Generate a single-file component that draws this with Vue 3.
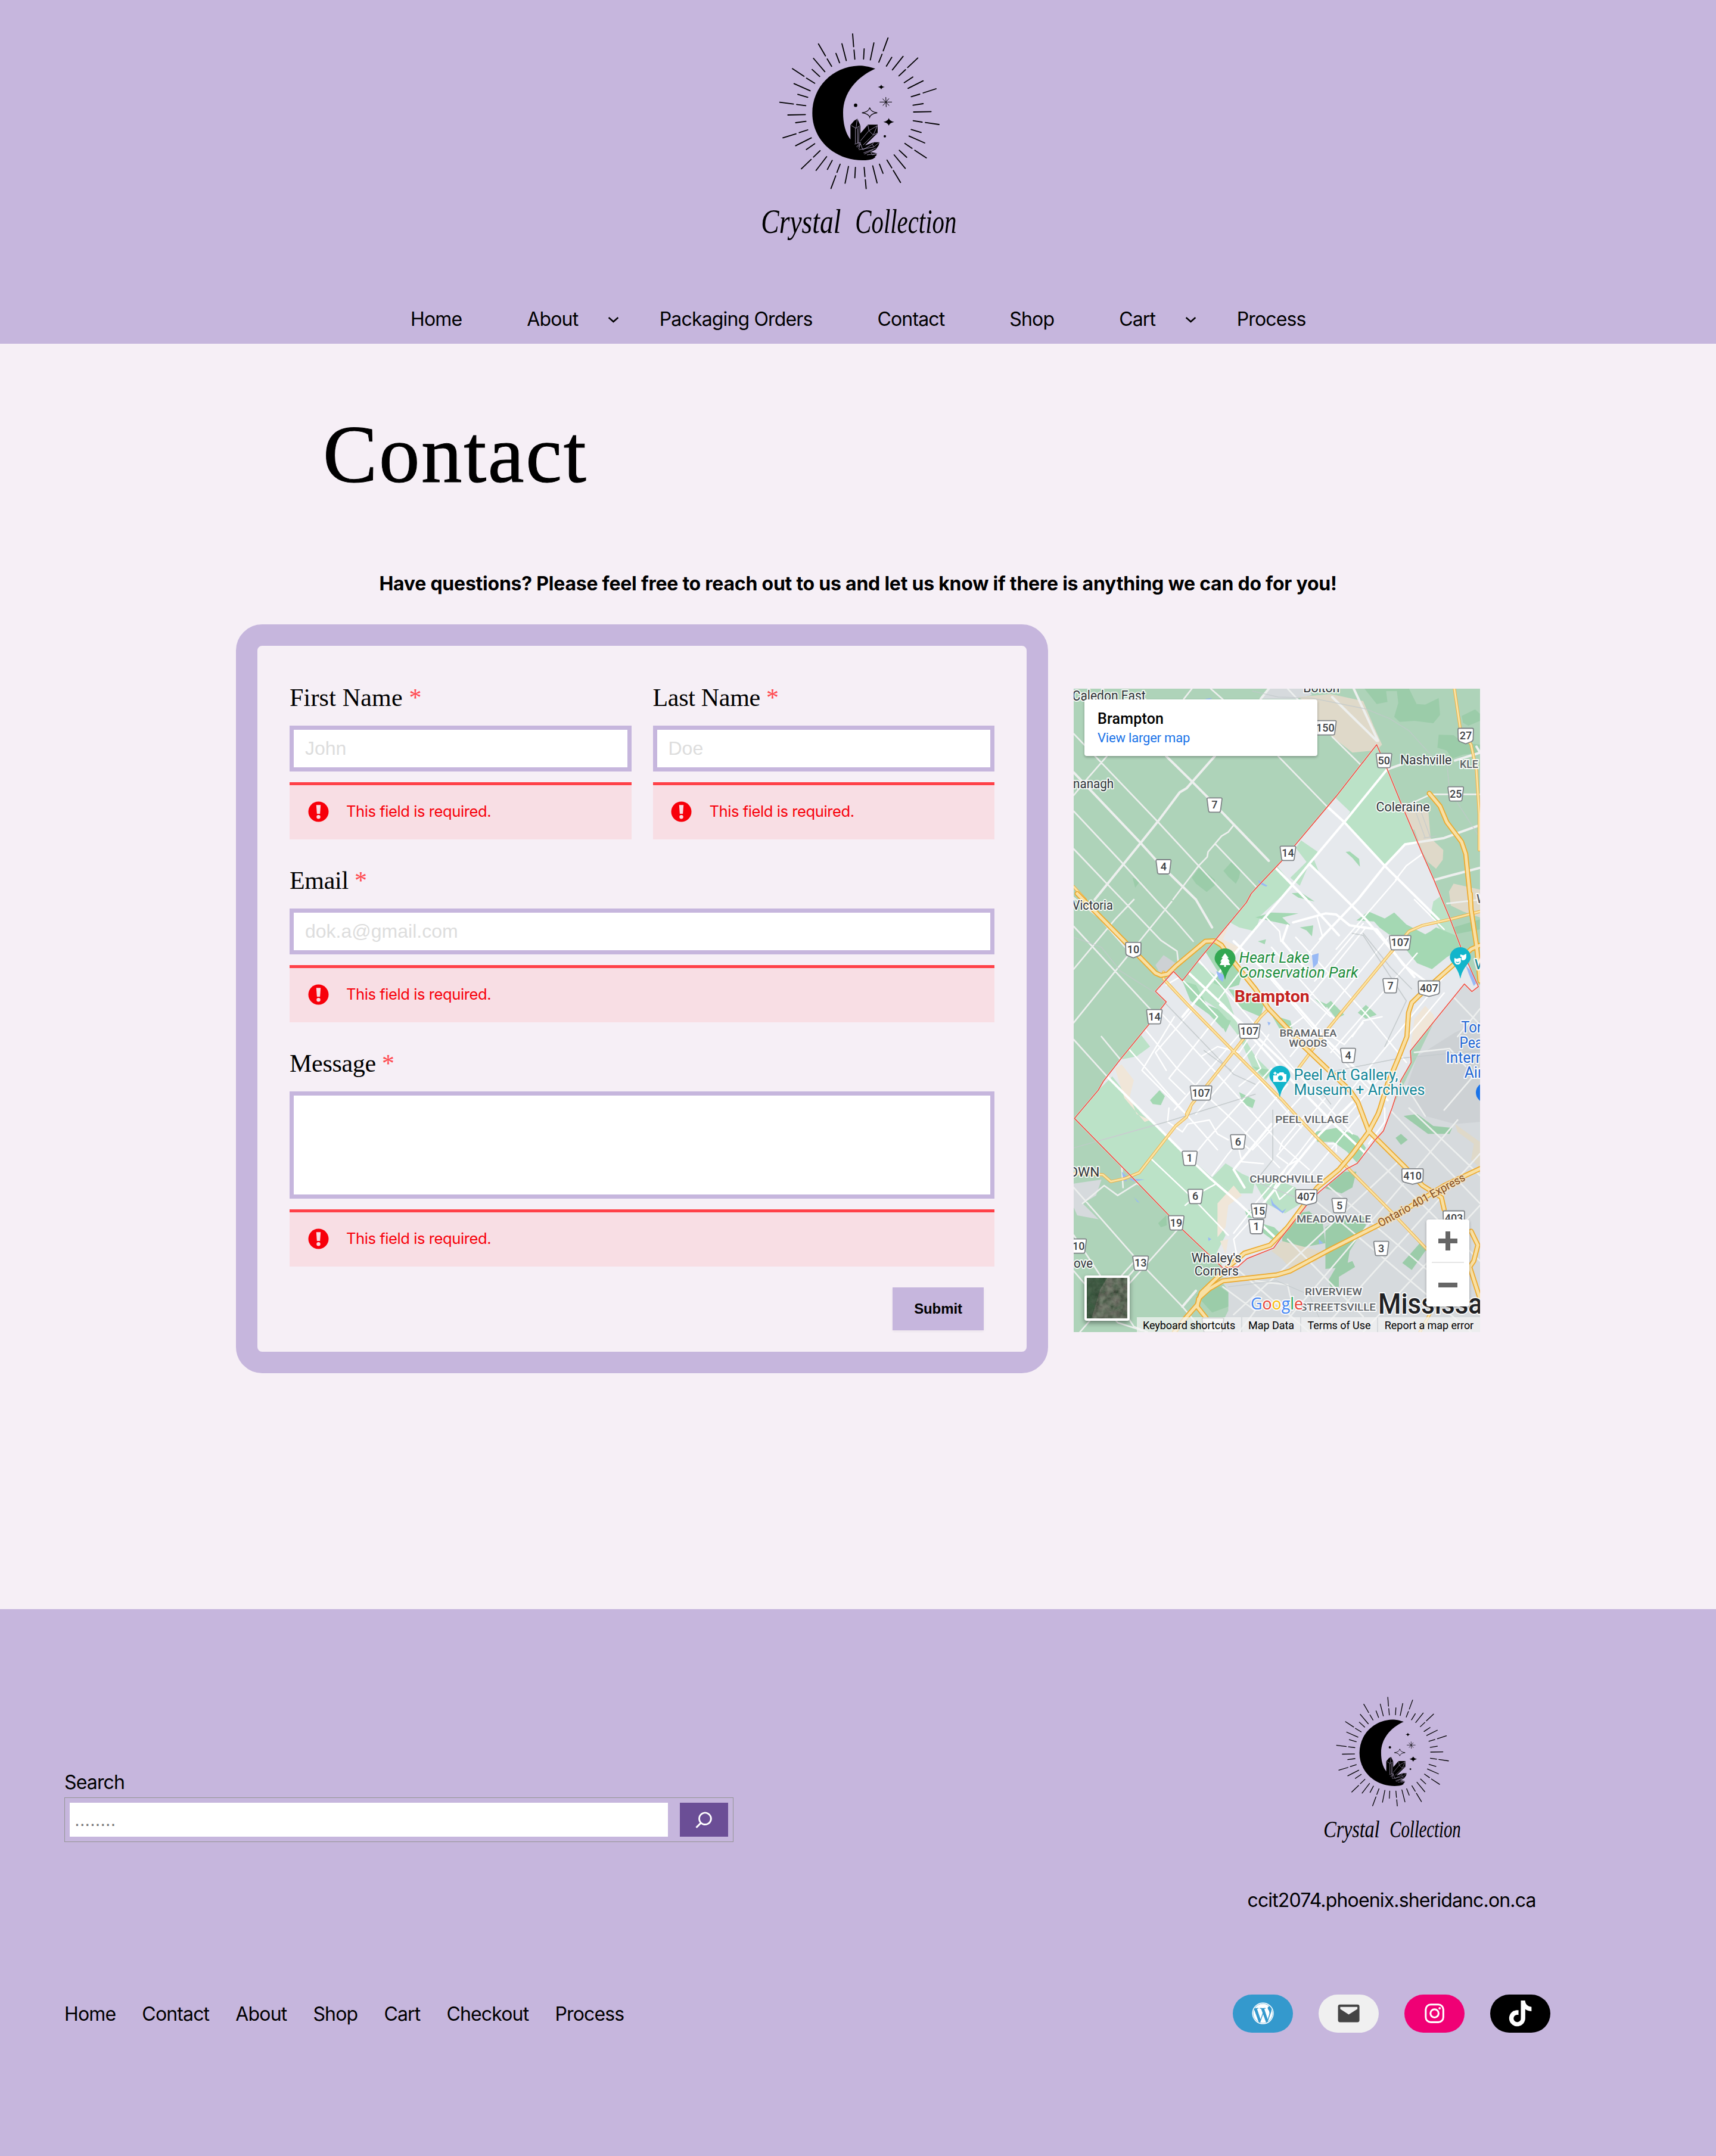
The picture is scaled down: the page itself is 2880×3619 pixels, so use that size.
<script setup>
import { h } from 'vue'

const nav = [
  { label: 'Home' },
  { label: 'About', sub: true },
  { label: 'Packaging Orders' },
  { label: 'Contact' },
  { label: 'Shop' },
  { label: 'Cart', sub: true },
  { label: 'Process' }
]
const footerNav = ['Home', 'Contact', 'About', 'Shop', 'Cart', 'Checkout', 'Process']

/* Brand mark, shared by the header and the footer */
const rays =
  'M573 81L578 145M580 162L584 208M401 131L436 191M445 207L467 244M519 130L541 215M489 179L507 226M376 204L433 271M369 260L407 295M270 256L328 294M341 304L382 329M278 331L359 367M297 385L347 400M206 425L275 434M291 436L337 442M247 489L335 487M286 528L338 521M222 604L288 584M304 578L347 564M286 644L365 604M340 663L382 634M376 701L409 669M315 760L364 713M389 768L442 699M446 763L470 718M494 778L510 737M464 859L488 795M535 833L552 748M584 805L587 753M631 753L635 799M637 815L641 860M674 745L696 831M708 737L726 783M746 716L770 755M778 769L814 829M782 690L838 758M808 667L845 702M836 632L872 657M886 667L944 705M857 595L936 630M868 562L918 577M878 518L923 525M939 527L1008 537M880 474L968 472M877 440L928 432M868 397L911 384M928 378L993 357M852 355L928 317M833 326L876 298M806 292L839 261M850 250L901 202M773 262L827 194M743 243L770 199M705 223L721 183M727 166L751 101M662 212L680 126M628 207L631 156'
const facets =
  'M566 542L590 556L611 542M590 556L596 510M587 556V632M598 556V630M606 548L603 632M583 636L615 626M650 540L655 568L697 543M655 568L677 590L697 543M655 568L612 620M677 590L626 640M677 590L697 580M690 590L640 640M604 660L612 632L624 664M604 664L680 650L706 628M625 664L672 637L680 650M672 637L680 626M628 680L690 656M632 686L676 664M645 690L694 684M664 676L672 690L694 684M592 650L610 630M598 652L612 634'
const BrandMark = () =>
  h('svg', { viewBox: '0 0 1200 1200', role: 'img' }, [
    h('path', { d: rays, stroke: '#000', 'stroke-width': 5.5, 'stroke-linecap': 'round', fill: 'none' }),
    h('path', { d: 'M687 256C650 244 625 240 604 241C470 246 370 350 370 480C370 612 480 717 622 717C645 717 662 715 675 710L688 701L560 610C535 575 525 530 525 478C525 380 590 300 687 256Z' }),
    h('path', { d: 'M562 612V540L580 518L597 508L612 542V582L650 538H699V580L636 642L680 626H708L704 642L690 662L664 676L695 682L692 694L672 706L600 690Z' }),
    h('path', { d: facets, stroke: '#c6b6dd', 'stroke-width': 2.2, fill: 'none' }),
    h('circle', { cx: 588, cy: 440, r: 8.5 }),
    h('circle', { cx: 735, cy: 596, r: 6 }),
    h('path', { d: 'M717 336Q719 346 735 348Q719 350 717 361Q715 350 699 348Q715 346 717 336Z' }),
    h('path', { d: 'M755 505Q759 520 782 524Q759 528 755 543Q751 528 728 524Q751 520 755 505Z' }),
    h('path', { d: 'M659 452Q664 474 697 478Q664 482 659 501Q654 482 620 478Q654 474 659 452Z', fill: 'none', stroke: '#000', 'stroke-width': 3.5 }),
    h('path', { d: 'M740 399L742 449M709 424H771M724 407L757 442M756 406L725 442', stroke: '#000', 'stroke-width': 3, fill: 'none' }),
    h('text', { x: 112, y: 1083, textLength: 402, lengthAdjust: 'spacingAndGlyphs', class: 'script' }, 'Crystal'),
    h('text', { x: 586, y: 1083, textLength: 510, lengthAdjust: 'spacingAndGlyphs', class: 'script' }, 'Collection')
  ])

const ErrorNote = () =>
  h('div', { class: 'error' }, [
    h('svg', { viewBox: '0 0 36 36', class: 'error-icon' }, [
      h('circle', { cx: 18, cy: 18, r: 17.5, fill: '#f7000a' }),
      h('path', { d: 'M14.2 6.5h7.6l-1.1 15h-5.4z', fill: '#f8dee4' }),
      h('circle', { cx: 18, cy: 27, r: 3.3, fill: '#f8dee4' })
    ]),
    h('span', 'This field is required.')
  ])

const SX = 2.2085
const SY = 3
const band = [0, 1080, 2160]
const at = (x, y, b) => ({ x: (x - 27) / SX, y: (y + band[b] - 48) / SY })

const city =
  '1150,330 1000,590 845,840 795,920 708,1045 685,1080 667,1125 490,1415 430,1518 397,1472 330,1572 370,1625 305,1740 200,1915 137,2025 118,2070 62,2160 30,2212 225,2482 380,2700 430,2772 580,2965 635,2960 670,2918 768,2865 795,2815 890,2650 935,2585 1040,2465 1078,2438 1145,2320 1175,2275 1207,2160 1240,2020 1278,1930 1275,1872 1365,1720 1475,1535 1503,1573 1527,1548 1462,1350 1420,1200 1383,1080 1362,1010 1320,880 1245,640 1188,450'

const outerGreens = [
  '1105,48 1150,125 1190,115 1185,60 1225,60 1230,120 1215,190 1235,215 1290,210 1360,222 1385,180 1380,95 1330,128 1298,125 1270,48',
  '1465,185 1515,152 1533,175 1533,210 1490,235 1470,220',
  '1380,280 1435,282 1470,320 1533,330 1533,370 1470,380 1430,400 1410,360 1375,345',
  '465,1000 495,945 550,1010 552,1035 520,1072 480,1030',
  '582,965 612,920 645,965 640,1000 628,1030 600,995',
  '245,1000 275,1015 255,1050',
  '1410,1260 1533,1210 1533,1260 1420,1290',
  '340,2740 370,2700 372,2750 350,2760',
  '950,2560 1010,2480 1075,2480 1060,2560 1020,2590',
  '960,2760 1010,2720 1100,2700 1110,2750 1050,2880 1040,2960 960,2970',
  '800,2700 900,2680 950,2740 960,2840 880,2860 800,2850',
  '1245,2940 1310,2840 1335,2870 1280,2975',
  '1250,2200 1300,2190 1360,2250 1430,2260 1420,2290 1340,2290',
  '970,3030 1000,2960 1060,2930 1070,2960 1010,3010 1010,3060 980,3060',
  '480,3100 560,3050 600,3090 600,3160 540,3190',
  '1220,2310 1240,2290 1265,2320 1240,2345'
]
const cityLight = [
  '1150,330 1188,450 1310,830 1250,830 1180,940 1030,715 1052,668 992,590',
  '870,812 932,870 918,910 935,968 900,930 865,1040 830,1000 890,920 850,850',
  '780,940 838,1035 800,1090 720,1190 700,1270 640,1250 600,1220 685,1080 708,1045',
  '397,1472 480,1420 560,1500 600,1610 640,1760 700,1900 760,1980 740,2020 690,1960 640,1800 560,1660 480,1590 440,1540',
  '30,2212 62,2160 118,2070 170,2000 280,2190 540,2510 620,2590 560,2720 590,2800 560,2880 580,2965 380,2700 225,2482',
  '205,1915 260,1900 310,1850 270,1780 240,1830',
  '540,2510 590,2438 650,2490 700,2520 690,2590 620,2590',
  '700,2540 780,2520 850,2560 870,2640 810,2690 740,2640',
  '1360,1120 1400,1080 1440,1230 1462,1350 1400,1290 1350,1190'
]
const cityGreens = [
  '1075,1215 1120,1170 1180,1205 1215,1175 1260,1235 1330,1285 1350,1270 1370,1250 1460,1300 1470,1350 1410,1400 1355,1460 1300,1430 1240,1330 1160,1250 1140,1220',
  '500,1340 560,1330 620,1430 650,1490 640,1540 590,1560 545,1530 560,1470',
  '600,1560 690,1580 740,1600 720,1700 650,1660',
  '430,1520 480,1540 520,1640 560,1660 600,1720 580,1760 530,1690 460,1620',
  '960,1640 980,1620 1030,1690 1000,1710',
  '1080,1680 1110,1640 1150,1690 1110,1710',
  '920,1610 970,1640 960,1660',
  '760,1690 830,1720 840,1770 790,1760',
  '700,1200 760,1175 860,1180 800,1200 830,1240 730,1210',
  '865,1250 915,1240 910,1295 890,1265',
  '710,1320 740,1310 735,1335',
  '310,2120 345,2070 365,2100 350,2145 320,2140',
  '640,2080 700,2120 690,2160 655,2140',
  '690,1950 760,1970 740,2010',
  '1035,870 1050,868 1085,905 1088,945 1060,900',
  '835,1078 870,1075 920,1120 860,1100',
  '920,2280 1000,2260 1080,2300 1110,2360 1080,2440 1040,2380 990,2330 930,2330',
  '720,2740 770,2760 800,2800 770,2830 730,2790',
  '660,2670 700,2680 710,2720 670,2710',
  '560,1700 610,1720 590,1780'
]
const outerBeige = [
  '860,90 980,75 1100,110 1140,240 1170,330 1150,358 1060,370 985,290 930,240 920,150',
  '1220,650 1240,625 1340,640 1350,800 1397,860 1395,910 1370,955 1340,920 1320,870 1290,760 1230,720',
  '1418,1070 1435,1030 1533,1060 1533,1200 1470,1170 1425,1140',
  '760,2880 800,2830 940,2880 930,2930 830,2970 800,2920',
  '1440,2240 1533,2330 1533,2460 1500,2420 1510,2340 1450,2280'
]
const cityBeige = [
  '535,1280 560,1225 600,1250 580,1310 640,1350 620,1380 560,1330',
  '180,1960 205,1940 250,2020 235,2100 260,2190 310,2220 290,2230 215,2110',
  '1290,1710 1330,1645 1360,1690 1365,1720 1275,1860',
  '560,2640 620,2550 650,2600 600,2650 590,2760 560,2810',
  '570,2830 600,2820 590,2900'
]
const waters = [
  '910,1390 935,1380 932,1430 915,1455',
  '555,1470 585,1490 580,1525 565,1510',
  '1480,1440 1500,1470 1520,1530 1510,1545 1490,1480',
  '710,1012 745,1040 740,1045 715,1030',
  '205,2480 225,2505 222,2530 212,2525',
  '230,2515 290,2520 250,2530',
  '745,1725 757,1730 750,1745',
  '757,2610 768,2640 800,2680 815,2665 802,2690 762,2650',
  '525,2810 537,2820 527,2830',
  '935,2820 952,2840 937,2845',
  '250,2608 272,2638 262,2632',
  '515,100 540,94 525,110'
]

const outerRoads =
  'M27 275L340 720L490 940L620 1130L760 1330M27 665L210 930L330 1110L400 1210L470 1320M27 855L150 1030L210 1115L350 1315L410 1370L415 1430M785 388L965 640M985 290L1090 430M27 585L75 505L150 388M395 1110L490 940L522 895L525 870L575 790L600 770L620 735M552 830L720 1070M435 100L465 48M535 48L580 102M820 48L870 120M1240 430L1188 455M1350 580H1533M1240 650L1350 580M27 1245L330 1690M27 1100L120 1200L250 1400M27 1730L390 1120M27 1460L180 1210L250 1110M27 1815L210 2090M200 1915L130 1800M27 2560L260 2920L430 3160L480 3240M27 2800L250 3260L300 3288M60 2640L140 2550L190 2600L260 2540L300 2560M27 2980L190 3240L280 3280M130 3200L420 2760L540 2560M260 2920L120 3130M50 3288L260 2960M205 2450L210 2560M1410 1130L1533 1110M1385 1530L1533 1740M900 2600L1500 3288M960 2540L1533 3200M1090 2340L1533 2930M1200 2170L1533 2640M1270 2160L1533 2500M640 2980L900 3288M820 2820L1100 3210M780 3288L1450 2220M620 3200L900 2850L1230 2430M940 3288L1533 2390M1100 3288L1533 2650M1040 1930L1110 1960M1290 1880L1420 1860L1480 1950M1400 2170L1533 1960M1330 2200L1260 2050M1450 1800L1533 1660M580 3060L700 3180L640 3288M700 3030L820 3050L830 3110'
const outerMain =
  'M27 470L275 825L345 930L480 1110L540 1250M370 388L465 515L520 590L750 915M105 1110L275 825L340 715L420 570L445 550L550 388M985 90L1150 310M1065 48L1155 310M720 100L750 48M1188 455L1240 430M1300 822L1400 800L1533 735M1240 1110L1300 1035L1420 990L1533 950M430 3160L480 3080M1520 340L1533 370M1440 410L1533 370'
const rails =
  'M690 60L785 90L910 95L1110 150L1200 200L1270 260L1350 380L1410 420L1420 560L1533 800M27 1300L130 1350L200 1470L330 1580L620 1990L700 2040M27 2360L370 2230L700 2090M765 2170V2420L700 2530L870 2620M1100 1280L1200 1450L1280 1560M510 1870L610 1970M930 2050L980 2140M600 3060L780 3030L900 3100L960 3288M1290 650L1330 800M1310 650L1350 800M1325 800L1370 790M1060 1280L1100 1290L1260 1620L1180 1850M970 1980L1230 1910L1533 1870'
const cityMain =
  'M1188 455L1030 720L900 930L835 1040L680 1290L430 1700M1300 822L1255 832L1180 940L1080 1110L940 1310M750 915L890 1110L1010 1290M965 640L1030 720L1180 940L1380 1210M840 1225L880 1210L960 1180L1000 1185L1050 1240L1150 1260L1250 1440L1370 1560M150 2000L290 2190L430 2380L530 2510L640 2640L780 2820M430 1450L580 1640L820 2000L1000 2250L1110 2390M570 1640L640 1720L690 1780L850 1990M900 930L960 1010L1110 1210L1290 1500M620 1320L760 1500L960 1810L1190 2120M700 2690L760 2590L940 2290L1060 2130M820 1240L800 1320L900 1480M660 2560L620 2470L760 2240'
const cityRoads =
  'M1230 1000L1000 1360M1320 880L1260 940L1220 1010M1290 1110L1400 1260M740 1200L790 1270L795 1320M930 1200L950 1300L900 1380M1100 1230L920 1520M1110 1250L900 1600M1200 1290L830 1900M1300 1380L980 1880M1410 1480L1180 1860L1060 2060M1400 1580L1270 1790M850 1300L1120 1700L1260 1930M760 1350L1000 1720M700 1420L960 1830L1140 2090M640 1480L560 1620M480 1400L900 2050L1060 2290M400 1560L640 1900L870 2260M350 1680L560 1990L800 2350L900 2470M290 1760L410 1960L640 2250L790 2460M230 1860L560 2370M400 1700L280 1970L450 2200M470 1660L330 1880L370 1970M560 1700L380 2010L440 2090M640 1790L400 2170M700 1840L480 2190M760 1960L520 2320L460 2420M820 2040L600 2390L540 2500M900 2060L690 2370M960 2110L780 2400L820 2440M1030 2090L860 2390L700 2640M1090 2190L900 2500M1160 2010L1040 2200M690 1780L640 1880L560 1850L500 1900M750 1790L700 1900L720 1960L640 2050M1100 1730L1030 1840L960 1780M1170 1700L1100 1720L1060 1800M380 2160L375 2230L430 2280L450 2240L530 2220L560 2290L600 2320M640 2370L650 2430L730 2440M790 2370L800 2330L880 2200M860 2420L820 2450L770 2560L790 2620L840 2560M970 2340L1000 2340L1000 2380M1180 2160L1180 2230L1120 2340M370 1540L420 1500L560 1700M880 1700L830 1750M900 1600L980 1700M620 2300L680 2370M310 2410L450 2590L480 2630L600 2800M550 2545L490 2590L440 2650M620 2790L700 2650M640 2960L620 2820L740 2640'
const highways =
  'M40 1080L110 1175L215 1320L330 1480L350 1492L375 1485L405 1445L515 1320L550 1318L575 1340L600 1390L700 1560L750 1660L820 1760L880 1850L1050 2070L1080 2130L1120 2275L1250 2450L1320 2550L1390 2610L1400 2670M1500 2780L1525 2850L1510 2930L1495 2960L1533 3120M1163 2160L1155 2190L1120 2280L1060 2390L1010 2470L930 2560L880 2650L820 2760L755 2850L660 2890L600 2960L500 3090L485 3150L440 3220L400 3288M1533 1340L1500 1360L1400 1480L1310 1590L1280 1630L1268 1680L1262 1800L1230 1910L1190 2040L1163 2160M1497 1080L1500 1160L1520 1340L1533 1520M1533 2465L1400 2550L1270 2660L1155 2750L980 2870L830 2980L780 3000L580 3030L530 3070L490 3120L485 3160L520 3220M1345 575L1385 640L1410 720L1465 820L1480 880L1497 1110'
const arterials =
  'M360 1475V1510L450 1640L620 1875L800 2120L840 2180L930 2310L1020 2430L1210 2690L1335 2870M400 3280M445 2190L465 2140L530 2030L620 1875L720 1700L750 1660M460 2160L445 2205L405 2250L270 2485L215 2515L165 2530L135 2495L27 2490M860 1960L970 1760L1200 1380L1270 1270L1320 1240L1420 1210L1533 1170M1438 48L1460 250L1500 330L1520 460L1530 680V860M27 1045L70 1110M1310 3288L1350 3190'

const places = [
  ['Caledon East', 22, 107, 0, 123, 23], ['Bolton', 878, 66, 0, 61, 22], ['Nashville', 1237, 428, 0, 86.5, 22], ['KLE', 1458, 447, 0, 31, 18, 'dim'],
  ['Coleraine', 1148, 665, 0, 90, 22], ['nanagh', 25, 550, 0, 68, 22], ['Victoria', 22, 82, 1, 68, 22], ['W', 1520, 48, 1, 18, 20, 'dim'],
  ['OWN', 8, 345, 2, 52, 22], ['ove', 27, 803, 2, 32, 22], ["Whaley's", 463, 776, 2, 84, 22], ['Corners', 475, 842, 2, 74, 22],
  ['BRAMALEA', 790, 720, 1, 96, 17, 'dim'], ['WOODS', 825, 770, 1, 64, 17, 'dim'], ['PEEL VILLAGE', 774, 76, 2, 123, 17, 'dim'],
  ['CHURCHVILLE', 679, 375, 2, 123, 17, 'dim'], ['MEADOWVALE', 853, 576, 2, 125, 17, 'dim'], ['RIVERVIEW', 884, 943, 2, 96, 17, 'dim'],
  ['STREETSVILLE', 866, 1019, 2, 127, 17, 'dim'],
  ['Heart Lake', 640, 347, 1, 118, 25, 'park'], ['Conservation Park', 640, 422, 1, 200, 25, 'park'],
  ['Brampton', 623, 545, 1, 126, 27, 'focus'],
  ['Peel Art Gallery,', 843, 938, 1, 175, 25, 'art'], ['Museum + Archives', 843, 1014, 1, 220, 25, 'art'],
  ['W', 1512, 380, 1, 24, 24, 'art'],
  ['Toronto', 1463, 700, 1, 82, 25, 'air'], ['Pearson', 1457, 776, 1, 84, 25, 'air'], ['International', 1407, 852, 1, 138, 25, 'air'], ['Airport', 1475, 927, 1, 76, 25, 'air']
].map(([t, x, y, b, w, s, c]) => ({ t, w, s, c, ...at(x, y, b) }))

const badges = [
  ['150', 960, 245, 0], ['27', 1480, 285, 0, 1], ['50', 1177, 410, 0], ['25', 1443, 578, 0], ['7', 549, 634, 0], ['14', 821, 877, 0], ['4', 360, 945, 0],
  ['10', 248, 283, 1, 1], ['14', 326, 620, 1], ['107', 678, 693, 1], ['107', 1237, 247, 1], ['7', 1201, 464, 1], ['407', 1344, 477, 1, 1], ['4', 1044, 815, 1], ['107', 499, 1004, 1],
  ['6', 636, 170, 2], ['1', 457, 253, 2], ['6', 478, 445, 2], ['15', 714, 518, 2], ['1', 704, 597, 2], ['407', 889, 448, 2, 1], ['5', 1012, 491, 2],
  ['410', 1283, 343, 2, 1], ['19', 407, 578, 2], ['3', 1167, 707, 2], ['13', 275, 781, 2], ['10', 45, 695, 2], ['403', 1436, 555, 2, 1], ['', 543, 1093, 2]
].map(([t, x, y, b, shield]) => {
  const w = [18, 12.5, 13, 18][t.length]
  const d = shield
    ? `M${-w + 2} -12.5H${w - 2}Q${w} -12.5 ${w} -10L${w - 0.5} 6Q${w - 1} 9 ${w - 4} 10L0 13.5L${4 - w} 10Q${1 - w} 9 ${0.5 - w} 6L${-w} -10Q${-w} -12.5 ${2 - w} -12.5Z`
    : `M${-w + 2} -12H${w - 2}Q${w + 0.5} -12 ${w} -9.5L${w - 2.5} 10Q${w - 3} 12 ${w - 5} 12H${5 - w}Q${3 - w} 12 ${2.5 - w} 10L${-w} -9.5Q${-w - 0.5} -12 ${2 - w} -12Z`
  return { t, d, ...at(x, y, b) }
})
const pinShape = 'M0 52C-3 38 -8 33 -13 26C-16 22 -17.5 19 -17.5 16A17.5 17 0 1 1 17.5 16C17.5 19 16 22 13 26C8 33 3 38 0 52Z'
const pins = [
  { kind: 'tree', fill: '#34a853', ...at(588, 279, 1) },
  { kind: 'photo', fill: '#12b5cb', ...at(791, 870, 1) },
  { kind: 'mask', fill: '#12b5cb', ...at(1460, 273, 1) }
]
</script>

<template>
  <div class="page">
    <header class="top">
      <BrandMark class="brand" />
      <nav class="nav">
        <a v-for="n in nav" :key="n.label" :class="{ sub: n.sub }">
          {{ n.label }}
          <svg v-if="n.sub" viewBox="0 0 12 12" class="chev"><path d="M1.5 4L6 8l4.5-4" /></svg>
        </a>
      </nav>
    </header>

    <main>
      <h1>Contact</h1>
      <p class="intro">Have questions? Please feel free to reach out to us and let us know if there is anything we can do for you!</p>
      <div class="columns">
        <form class="card" @submit.prevent>
          <div class="row">
            <div class="field"><label class="wide">First Name <i>*</i></label><input placeholder="John" /><ErrorNote /></div>
            <div class="field"><label>Last Name <i>*</i></label><input placeholder="Doe" /><ErrorNote /></div>
          </div>
          <div class="field"><label>Email <i>*</i></label><input placeholder="dok.a@gmail.com" /><ErrorNote /></div>
          <div class="field"><label>Message <i>*</i></label><textarea></textarea><ErrorNote class="last" /></div>
          <button class="submit">Submit</button>
        </form>

        <div class="map">
          <svg viewBox="0 0 682 1080" class="canvas">
            <defs>
              <clipPath id="city"><polygon :points="city" /></clipPath>
            </defs>
            <rect width="682" height="1080" fill="#aed3b9" />
            <g transform="scale(.4528 .33333) translate(-27 -48)">
              <polygon fill="#d6dadd" points="1365,1720 1475,1535 1533,1540 1533,3288 560,3288 600,3180 600,3080 570,3020 640,2950 900,2630 1207,2160" />
              <polygon fill="#cdd1d4" points="1300,1900 1440,1780 1533,1720 1533,2230 1440,2240 1330,2200 1260,2060" />
              <polygon fill="#d6dadd" points="27,2540 130,2520 110,2600 60,2640 120,2720 40,2700 27,2660" />
              <polygon fill="#d6dadd" points="720,100 750,48 900,48 910,80 850,100" />
              <polygon fill="#cdd1d4" points="330,1440 360,1390 405,1430 400,1480 350,1490" />
              <polygon v-for="p in outerGreens" :key="p" :points="p" fill="#9bcca9" />
              <polygon v-for="p in outerBeige" :key="p" :points="p" fill="#dfd9c9" />
              <path :d="outerRoads" class="r" stroke="#edefee" stroke-width="2.6" />
              <path :d="outerMain" class="r" stroke="#edefee" stroke-width="4" />
              <g clip-path="url(#city)">
                <polygon :points="city" fill="#e6e9ed" />
                <polygon v-for="p in cityLight" :key="p" :points="p" fill="#bbe2c7" />
                <polygon v-for="p in cityGreens" :key="p" :points="p" fill="#a4d8b3" />
                <polygon v-for="p in cityBeige" :key="p" :points="p" fill="#f0e6d8" />
                <path :d="rails" class="r" stroke="#d2d5d8" stroke-width="1.6" />
                <path :d="cityRoads" class="r" stroke="#fff" stroke-width="2.4" />
                <path :d="cityMain" class="r" stroke="#fff" stroke-width="4" />
              </g>
              <polygon v-for="p in waters" :key="p" :points="p" fill="#98b9f5" />
              <path :d="rails" class="r" stroke="#c2c9cb" stroke-width="1.5" opacity=".7" />
              <path :d="arterials" class="r" stroke="#eeb044" stroke-width="5" />
              <path :d="arterials" class="r" stroke="#fbe3a2" stroke-width="3" />
              <path :d="highways" class="r" stroke="#eda92c" stroke-width="8.5" />
              <path :d="highways" class="r" stroke="#f8e0a4" stroke-width="5" />
              <polygon :points="city" class="r" stroke="#fff" stroke-width="3" opacity=".5" />
              <polygon :points="city" class="r" stroke="#ee5347" stroke-width="1.7" />
            </g>

            <g v-for="(b, i) in badges" :key="'b' + i" :transform="`translate(${b.x} ${b.y})`">
              <path :d="b.d" fill="#fff" stroke="#7f8387" stroke-width="1.8" />
              <text v-if="b.t" y="6" text-anchor="middle" class="num">{{ b.t }}</text>
            </g>

            <g v-for="p in pins" :key="p.kind" :transform="`translate(${p.x} ${p.y})`">
              <path :d="pinShape" :fill="p.fill" />
              <path v-if="p.kind === 'tree'" fill="#fff" d="M0 7L6 15H4L8 21H6L9 27H1.5V30H-1.5V27H-9L-6 21H-8L-4 15H-6Z" />
              <g v-else-if="p.kind === 'photo'">
                <path fill="#fff" d="M-11 15H-5V12H-2L0 10H6L8 13H11V26H-11Z" />
                <path stroke="#fff" stroke-width="1.8" d="M-8 9V14M-10.5 11.5H-5.5" />
                <circle cx="1" cy="19.5" r="4.2" :fill="p.fill" />
              </g>
              <g v-else fill="#fff">
                <path d="M-10 17L-6 18.5L-2 17H1V23Q0 28 -4.500 28Q-9 28 -10 23Z" />
                <path d="M0 11L5 12.500L10 10V16Q9 21 4 21L2 20V15H0Z" />
                <path d="M-7.500 23.500Q-4.500 26 -1.500 23.500" fill="none" :stroke="p.fill" stroke-width="1.4" />
              </g>
            </g>
            <circle cx="692" cy="678" r="17" fill="#1a73e8" />

            <text v-for="(p, i) in places" :key="'p' + i" :x="p.x" :y="p.y" :font-size="p.s" :textLength="p.w" lengthAdjust="spacingAndGlyphs" class="place" :class="p.c">{{ p.t }}</text>
            <text transform="translate(515 904) rotate(-29)" font-size="19" textLength="164" lengthAdjust="spacingAndGlyphs" class="place road">Ontario 401 Express</text>
            <text x="511" y="1049" font-size="49" textLength="248" lengthAdjust="spacingAndGlyphs" class="place big">Mississauga</text>
            <text x="297" y="1042" font-size="27" textLength="88" lengthAdjust="spacingAndGlyphs" class="place google"><tspan fill="#4285f4">G</tspan><tspan fill="#ea4335">o</tspan><tspan fill="#fbbc04">o</tspan><tspan fill="#4285f4">g</tspan><tspan fill="#34a853">l</tspan><tspan fill="#ea4335">e</tspan></text>
          </svg>
          <div class="info"><b>Brampton</b><span>View larger map</span></div>
          <div class="zoom"><span class="plus"></span><hr /><span class="minus"></span></div>
          <div class="thumb">
            <svg viewBox="0 0 68 68">
              <filter id="terrain" x="0" y="0" width="100%" height="100%">
                <feTurbulence type="fractalNoise" baseFrequency=".09" numOctaves="4" seed="4" />
                <feColorMatrix values=".5 .3 0 0 -.14  .4 .45 0 0 -.12  .4 .3 0 0 -.12  0 0 0 0 1" />
              </filter>
              <rect width="68" height="68" fill="#45503f" />
              <rect width="68" height="68" filter="url(#terrain)" />
              <rect width="68" height="68" fill="#20281f" opacity=".4" />
              <path d="M0 0H34L22 20L8 68H0Z" fill="#1f4a2c" opacity=".5" />
            </svg>
          </div>
          <div class="legal"><span>Keyboard shortcuts</span><span>Map Data</span><span>Terms of Use</span><span>Report a map error</span></div>
        </div>
      </div>
    </main>

    <footer>
      <div class="left">
        <div class="search">
          <label>Search</label>
          <div class="searchbox">
            <input placeholder="........" />
            <button aria-label="Search">
              <svg viewBox="0 0 24 24"><path fill="#fff" d="M13 5c-3.3 0-6 2.7-6 6 0 1.4.5 2.7 1.3 3.7l-3.8 3.8 1.1 1.1 3.8-3.8c1 .8 2.3 1.3 3.7 1.3 3.3 0 6-2.7 6-6S16.3 5 13 5zm0 10.500c-2.500 0-4.500-2-4.500-4.500s2-4.500 4.500-4.500 4.500 2 4.500 4.500-2 4.500-4.500 4.500z" /></svg>
            </button>
          </div>
        </div>
        <nav class="links"><a v-for="l in footerNav" :key="l">{{ l }}</a></nav>
      </div>
      <div class="right">
        <BrandMark class="brand small" />
        <p>ccit2074.phoenix.sheridanc.on.ca</p>
        <div class="social">
          <a class="wp"><svg viewBox="0 0 24 24" fill="#fff"><path d="M12.158,12.786L9.46,20.625c0.806,0.237,1.657,0.366,2.54,0.366c1.047,0,2.051-0.181,2.986-0.51c-0.024-0.038-0.046-0.079-0.065-0.124L12.158,12.786z M3.009,12c0,3.559,2.068,6.634,5.067,8.092L3.788,8.341C3.289,9.459,3.009,10.696,3.009,12z M18.069,11.546c0-1.112-0.399-1.881-0.741-2.48c-0.456-0.741-0.883-1.368-0.883-2.109c0-0.826,0.627-1.596,1.51-1.596c0.04,0,0.078,0.005,0.116,0.007C16.472,3.904,14.34,3.009,12,3.009c-3.141,0-5.904,1.612-7.512,4.052c0.211,0.007,0.41,0.011,0.579,0.011c0.94,0,2.396-0.114,2.396-0.114C7.947,6.93,8.004,7.642,7.52,7.699c0,0-0.487,0.057-1.029,0.085l3.274,9.739l1.968-5.901l-1.401-3.838C9.848,7.756,9.389,7.699,9.389,7.699C8.904,7.67,8.961,6.93,9.446,6.958c0,0,1.484,0.114,2.368,0.114c0.94,0,2.397-0.114,2.397-0.114c0.485-0.028,0.542,0.684,0.057,0.741c0,0-0.488,0.057-1.029,0.085l3.249,9.665l0.897-2.996C17.841,13.284,18.069,12.316,18.069,11.546z M19.889,7.686c0.039,0.286,0.06,0.593,0.06,0.924c0,0.912-0.171,1.938-0.684,3.22l-2.746,7.94c2.673-1.558,4.47-4.454,4.47-7.771C20.991,10.436,20.591,8.967,19.889,7.686z" /><circle cx="12" cy="12" r="9.650" fill="none" stroke="#fff" stroke-width=".8" /></svg></a>
          <a class="mail"><svg viewBox="0 0 24 24"><rect x="2" y="3.700" width="20" height="16.600" rx="1.900" fill="#444" /><path d="M4.100 6H20.100V7.900L12 13.100L4.100 7.900Z" fill="#f0f0f0" /></svg></a>
          <a class="ig"><svg viewBox="0 0 24 24" fill="none" stroke="#fff" stroke-width="1.700"><rect x="3.800" y="3.800" width="16.400" height="16.400" rx="4.600" /><circle cx="12" cy="12" r="3.800" /><circle cx="16.800" cy="7.200" r="1.100" fill="#fff" stroke="none" /></svg></a>
          <a class="tt"><svg viewBox="0 0 32 32" fill="#fff"><path d="M16.708 0.027c1.745-0.027 3.48-0.011 5.213-0.027 0.105 2.041 0.839 4.12 2.333 5.563 1.491 1.479 3.6 2.156 5.652 2.385v5.369c-1.923-0.063-3.855-0.463-5.6-1.291-0.76-0.344-1.468-0.787-2.161-1.24-0.009 3.896 0.016 7.787-0.025 11.667-0.104 1.864-0.719 3.719-1.803 5.255-1.744 2.557-4.771 4.224-7.88 4.276-1.907 0.109-3.812-0.411-5.437-1.369-2.693-1.588-4.588-4.495-4.864-7.615-0.032-0.667-0.043-1.333-0.016-1.984 0.24-2.537 1.495-4.964 3.443-6.615 2.208-1.923 5.301-2.839 8.197-2.297 0.027 1.975-0.052 3.948-0.052 5.923-1.323-0.428-2.869-0.308-4.025 0.495-0.844 0.547-1.485 1.385-1.819 2.333-0.276 0.676-0.197 1.427-0.181 2.145 0.317 2.188 2.421 4.027 4.667 3.828 1.489-0.016 2.916-0.88 3.692-2.145 0.251-0.443 0.532-0.896 0.547-1.417 0.131-2.385 0.079-4.76 0.095-7.145 0.011-5.375-0.016-10.735 0.025-16.093z" /></svg></a>
        </div>
      </div>
    </footer>
  </div>
</template>

<style>
body { background: #f6eff6; }
.script { font-family: "Liberation Serif", serif; font-style: italic; font-size: 172px; fill: #000; }
.error { display: flex; align-items: center; box-sizing: border-box; height: 96px; margin-top: 18px; padding-left: 30.5px; border-top: 5px solid #ff4148; background: #f8dee4; color: #f7000a; font: 25.6px/36px Inter, sans-serif; letter-spacing: -.45px; }
.error.last { padding-bottom: 0; }
.error-icon { width: 35px; height: 35px; margin: 0 29.5px 2px 0; flex: none; }
.error span { margin-bottom: 4px; }
</style>

<style scoped>
.page { width: 2880px; height: 3619px; display: flex; flex-direction: column; overflow: hidden; background: #f6eff6; color: #000; font: 32px/48px Inter, sans-serif; }
.page * { box-sizing: border-box; }
.top { height: 577px; background: #c6b6dd; display: flex; flex-direction: column; align-items: center; padding-top: 30px; }
.brand { width: 400px; height: 400px; display: block; flex: none; }
.nav { display: flex; align-self: flex-start; margin: 81.5px 0 0 689px; gap: 109px; letter-spacing: -.85px; white-space: nowrap; }
.nav .sub { display: flex; align-items: center; gap: 49px; margin-right: -42.5px; }
.chev { width: 21px; height: 21px; margin-top: 2px; fill: none; stroke: #000; stroke-width: 1.4; }
main { flex: none; height: 2124px; }
h1 { margin: 110px 0 0 542px; font: 400 137px/152px "Liberation Serif", serif; letter-spacing: 2.6px; -webkit-text-stroke: 1px #000; }
.intro { margin: 116.5px 0 0; text-align: center; font-weight: 700; letter-spacing: -.23px; }
.columns { display: flex; align-items: flex-start; gap: 43px; padding-left: 396px; margin-top: 44.5px; }
.card { width: 1363px; height: 1257px; border: 36px solid #c6b6dd; border-radius: 44px; padding: 64px 54px 0; display: flex; flex-direction: column; }
.row { display: flex; gap: 36px; }
.row .field { flex: 1; }
.field { display: flex; flex-direction: column; margin-bottom: 46px; }
.field:last-of-type { margin-bottom: 0; }
.row .field { margin-bottom: 46px; }
.field label { font: 42px/46px "Liberation Serif", serif; margin-bottom: 24px; letter-spacing: -.3px; }
.field label.wide { letter-spacing: .2px; }
.field label i { color: #ff4a50; font-style: normal; }
.field input, .field textarea { width: 100%; height: 77px; border: 7px solid #c6b6dd; background: #fff; padding: 0 19px; font: 32px "Liberation Sans", sans-serif; letter-spacing: 0; border-radius: 0; outline: none; resize: none; }
.field textarea { height: 180px; display: block; }
.field input::placeholder { color: #ddd; opacity: 1; }
.submit { align-self: flex-end; margin: 35px 18px 0 0; width: 153px; height: 72px; padding: 0; border: 0; background: #c6b6dd; font: 700 24px "Liberation Sans", sans-serif; letter-spacing: -.1px; box-shadow: 0 2px 4px rgba(0, 0, 0, .05); color: #000; }

.map { position: relative; width: 682px; height: 1080px; margin-top: 108px; overflow: hidden; font-family: Roboto, sans-serif; }
.canvas { display: block; width: 682px; height: 1080px; }
.r { fill: none; vector-effect: non-scaling-stroke; stroke-linejoin: round; stroke-linecap: round; }
.num { font: 500 18px Roboto, sans-serif; fill: #3c4043; }
.place { font-family: Roboto, sans-serif; fill: #30343a; paint-order: stroke; stroke: #fff; stroke-opacity: .85; stroke-width: 4px; stroke-linejoin: round; }
.dim { fill: #5c6166; font-weight: 500; }
.park { fill: #1e8e3e; font-style: italic; }
.focus { fill: #c5221f; font-weight: 700; }
.art { fill: #16889a; }
.air { fill: #2166d4; }
.road { fill: #874d1c; stroke: #f3dfb6; }
.big { fill: #202124; font-weight: 500; }
.google { font-family: "Open Sans", sans-serif; font-weight: 500; }
.info { position: absolute; left: 18px; top: 18px; width: 391px; height: 95px; background: #fff; border-radius: 4px; box-shadow: 0 2px 4px rgba(0, 0, 0, .3); padding: 17px 22px; display: flex; flex-direction: column; line-height: 32px; }
.info b { font-size: 25px; font-weight: 500; letter-spacing: .2px; }
.info span { font-size: 22px; color: #1a73e8; letter-spacing: -.2px; }
.zoom { position: absolute; right: 18px; top: 891px; width: 72px; height: 146px; background: #fff; border-radius: 4px; box-shadow: 0 2px 4px rgba(0, 0, 0, .3); display: flex; flex-direction: column; align-items: center; }
.zoom hr { width: 54px; height: 2px; border: 0; margin: 19px 0 33px; background: #e6e6e6; }
.plus, .minus { width: 32px; height: 8px; background: #666; }
.plus { height: 32px; margin-top: 20px; background: linear-gradient(#666, #666) center / 32px 8px no-repeat, linear-gradient(#666, #666) center / 8px 32px no-repeat; }
.thumb { position: absolute; left: 18px; top: 985px; width: 76px; height: 76px; padding: 4px; background: #fff; border-radius: 4px; box-shadow: 0 4px 8px rgba(0, 0, 0, .4); }
.thumb svg { display: block; width: 68px; height: 68px; }
.legal { position: absolute; right: 0; bottom: 0; display: flex; gap: 2px; height: 25px; line-height: 28px; font-size: 18px; white-space: nowrap; }
.legal span { background: rgba(245, 245, 245, .7); text-align: center; width: 175px; letter-spacing: -.05px; }
.legal span:nth-child(2) { width: 97px; }
.legal span:nth-child(3) { width: 127px; }
.legal span:nth-child(4) { width: 171px; }

footer { flex: 1; background: #c6b6dd; display: flex; justify-content: space-between; padding: 0 278px 0 108px; letter-spacing: -.85px; }
.left { display: flex; flex-direction: column; padding-top: 266.5px; }
.search { display: flex; flex-direction: column; gap: 1.5px; }
.searchbox { width: 1123px; height: 75px; border: 1px solid #949494; padding: 8px; display: flex; gap: 20px; }
.searchbox input { width: 1004px; height: 57px; border: 0; padding: 0 8px; background: #fff; font: 32px "Liberation Sans", sans-serif; letter-spacing: -.25px; }
.searchbox input::placeholder { color: #757575; opacity: 1; }
.searchbox button { width: 81px; height: 57px; padding: 0; border: 0; background: #6b4e96; display: flex; align-items: center; justify-content: center; }
.searchbox button svg { width: 45px; height: 45px; }
.links { display: flex; gap: 44.1px; margin-top: 264.5px; }
.right { display: flex; flex-direction: column; align-items: center; width: 533px; padding-top: 129px; }
.brand.small { width: 281px; height: 281px; }
.right p { margin: 54.5px 0 0; }
.social { display: flex; gap: 43px; margin-top: 134.5px; }
.social a { width: 101px; height: 64px; border-radius: 32px; display: flex; align-items: center; justify-content: center; }
.social svg { width: 43.2px; height: 43.2px; }
.wp { background: #3499cd; }
.mail { background: #f0f0f0; }
.ig { background: #f00075; }
.tt { background: #000; }
</style>
